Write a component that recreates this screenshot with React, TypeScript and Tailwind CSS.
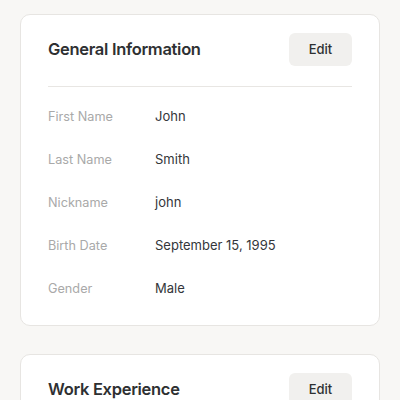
const general = [
  { label: 'First Name', value: 'John' },
  { label: 'Last Name', value: 'Smith' },
  { label: 'Nickname', value: 'john' },
  { label: 'Birth Date', value: 'September 15, 1995' },
  { label: 'Gender', value: 'Male' },
];

function SectionCard({ title, rows }: { title: string; rows: { label: string; value: string }[] }) {
  return (
    <div className="rounded-[10px] border border-[#e7e5e2] bg-white px-[27px]">
      <div className="flex items-center justify-between border-b border-[#e8e6e3] pt-[18px] pb-5">
        <h2 className="text-[16.5px] font-semibold tracking-[-0.3px] text-[#2e3032]">{title}</h2>
        <button className="h-[33px] w-[63px] rounded-md bg-[#f1f0ee] text-[13px] font-medium text-[#2e3032]">
          Edit
        </button>
      </div>
      {rows.length > 0 && (
        <div className="pt-2 pb-[15px]">
          {rows.map((r) => (
            <div key={r.label} className="flex h-[43px] items-center">
              <span className="w-[107px] text-[12.7px] text-[#a9a9a9]">{r.label}</span>
              <span className="text-[13px] text-[#34363a]">{r.value}</span>
            </div>
          ))}
        </div>
      )}
    </div>
  );
}

export default function App() {
  return (
    <div className="min-h-[400px] bg-[#f8f7f5] px-5 pt-[14px] font-['Inter',sans-serif]">
      <div className="flex flex-col gap-[28px]">
        <SectionCard title="General Information" rows={general} />
        <SectionCard title="Work Experience" rows={[]} />
      </div>
    </div>
  );
}
